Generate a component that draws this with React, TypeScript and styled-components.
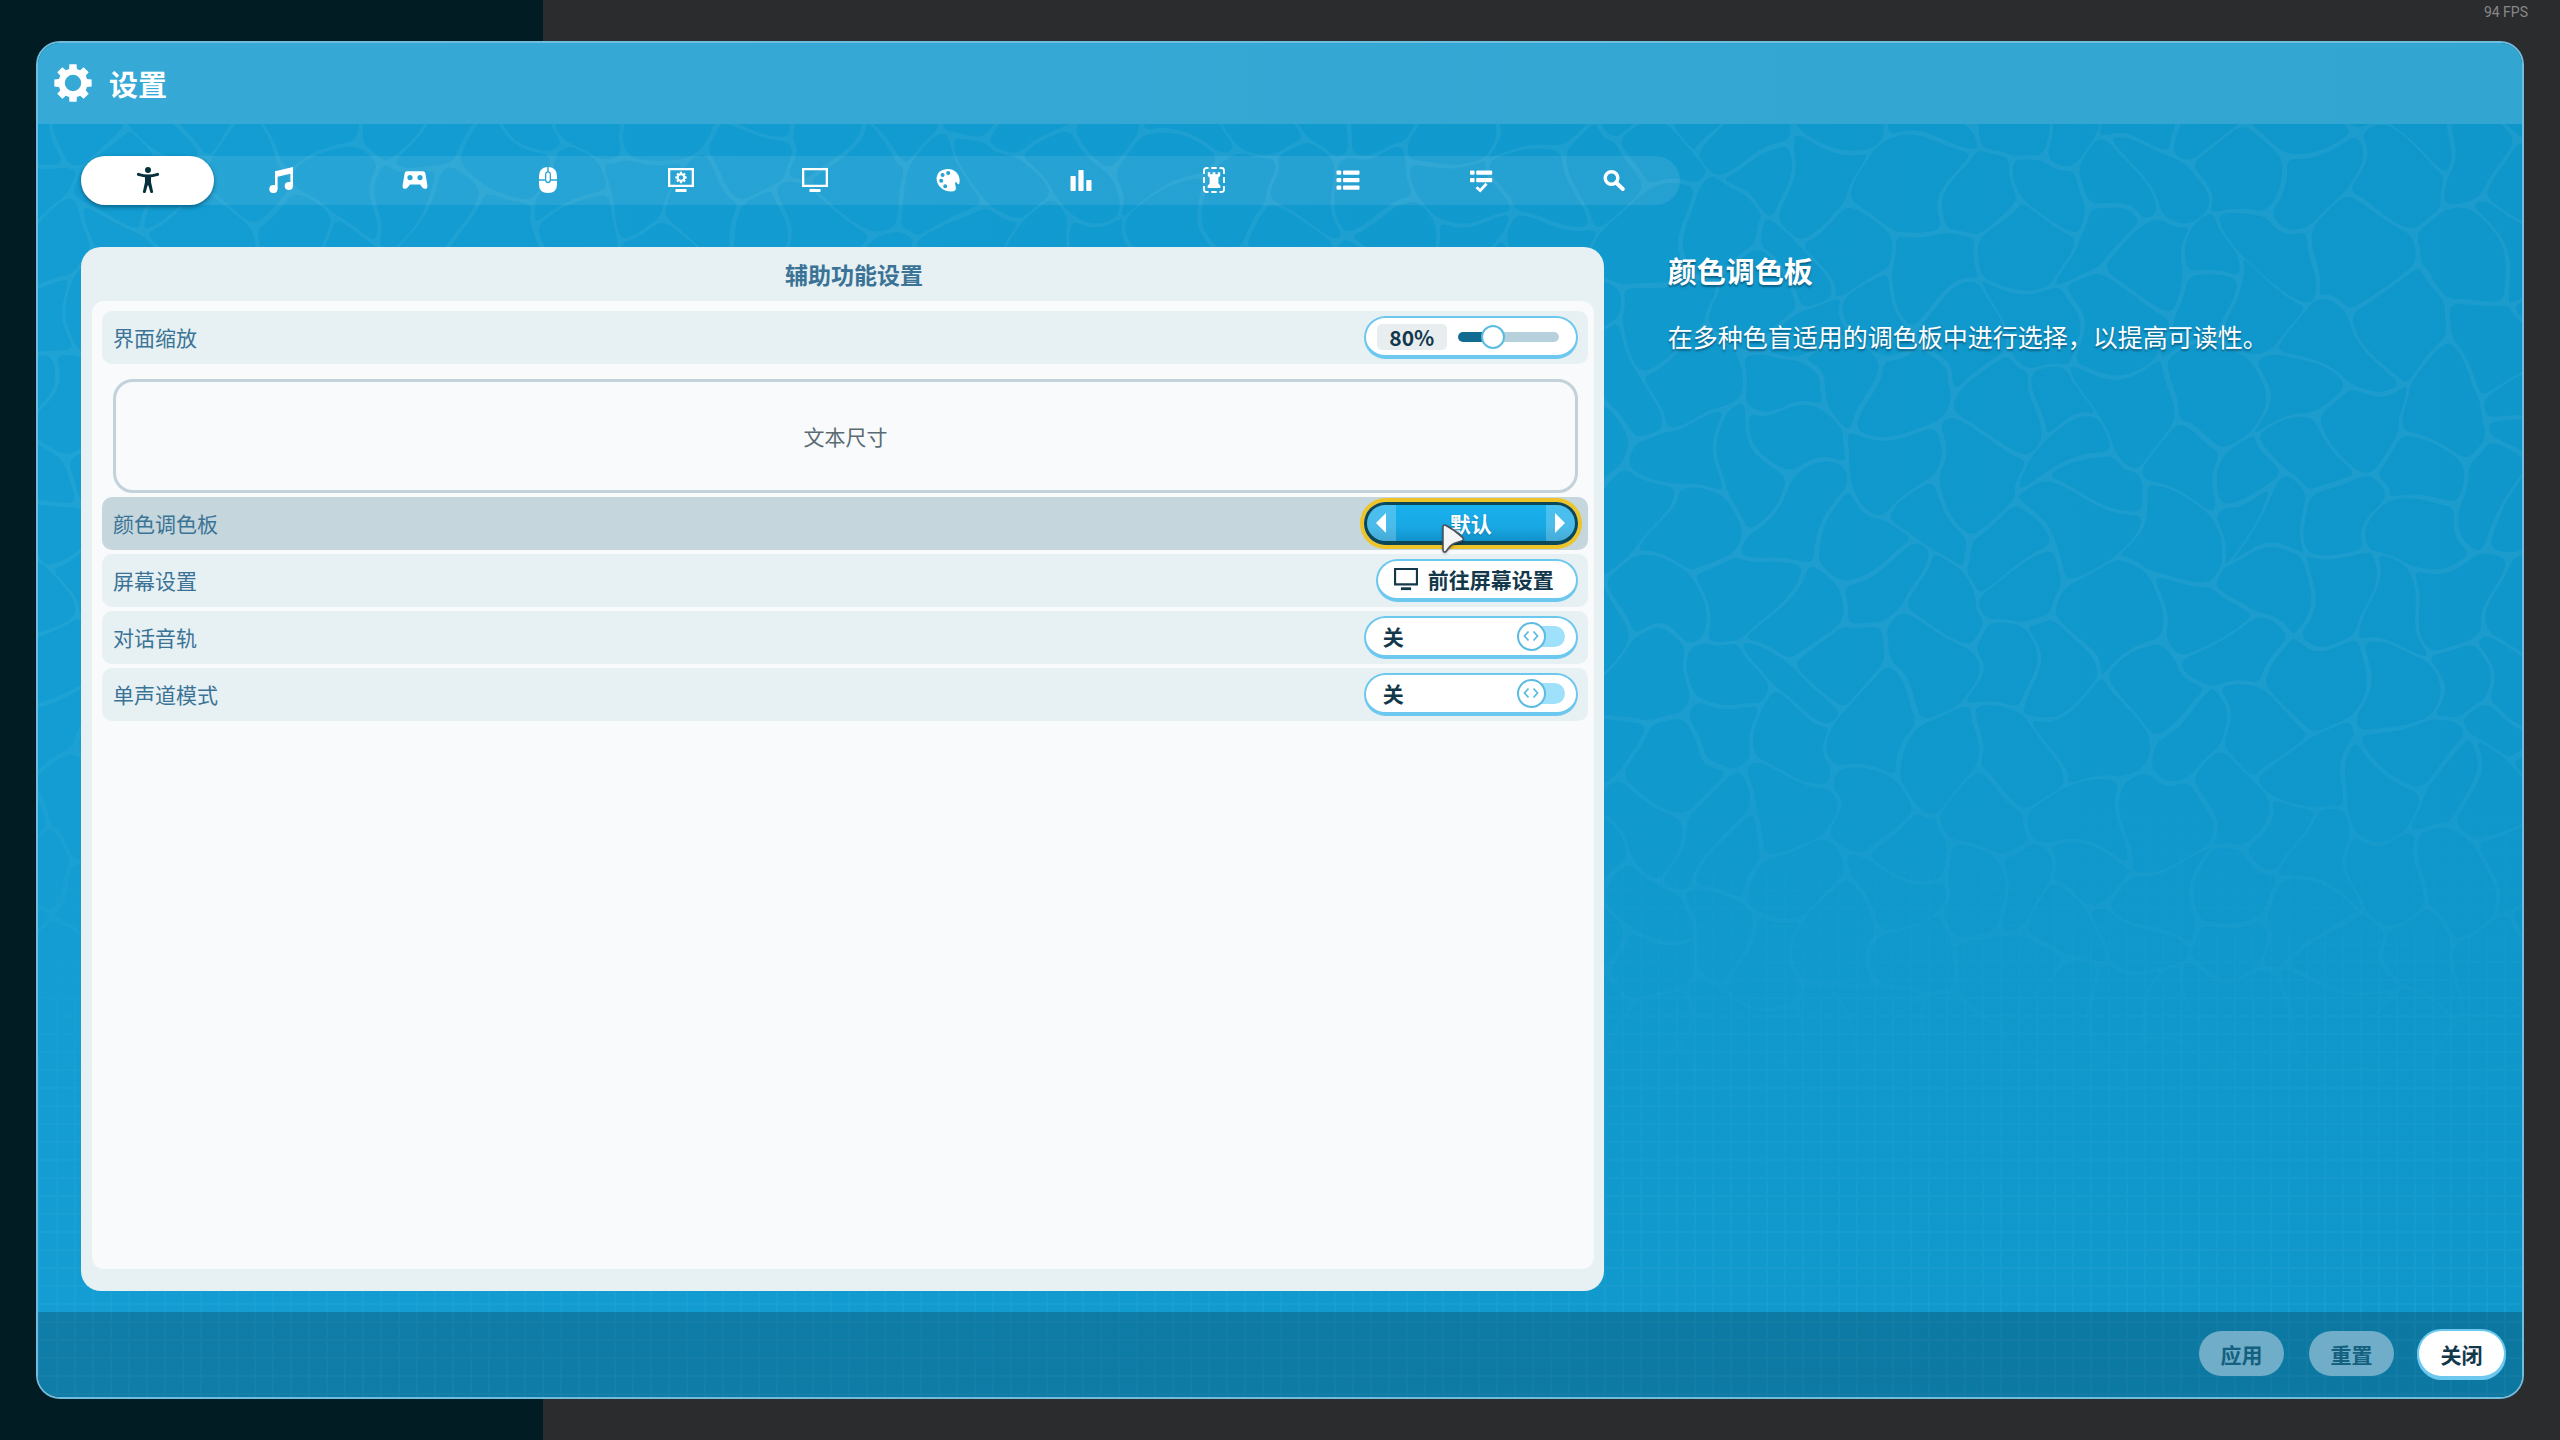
import React, { useState } from 'react';
import type { ReactNode } from 'react';
import styled, { createGlobalStyle, css } from 'styled-components';

const color = {
  ink: '#14384b',
  label: '#3a7396',
  line: '#6cc8ee',
  soft: '#e7f0f2',
  paper: '#f8fafc',
  selected: '#c5d6dc',
};

const GlobalStyle = createGlobalStyle`
  *, *::before, *::after { box-sizing: border-box; }
  body {
    margin: 0;
    font-family: 'Noto Sans CJK SC', 'Noto Sans', sans-serif;
    font-size: 21px;
    line-height: 30px;
    color: ${color.ink};
  }
  button, input { font: inherit; color: inherit; margin: 0; }
  h1, h2, h3, p { margin: 0; }
`;

/* ---------- water backdrop ---------- */

type Point = [number, number];

const W = 2484;
const H = 1354;

function random(seed: number) {
  let s = seed;
  return () => {
    s = (s * 1664525 + 1013904223) % 4294967296;
    return s / 4294967296;
  };
}

function clip(poly: Point[], a: Point, b: Point, inset: number): Point[] {
  const dx = b[0] - a[0];
  const dy = b[1] - a[1];
  const len = Math.hypot(dx, dy);
  const nx = dx / len;
  const ny = dy / len;
  const limit = len / 2 - inset;
  const dist = (p: Point) => (p[0] - a[0]) * nx + (p[1] - a[1]) * ny - limit;
  const out: Point[] = [];
  poly.forEach((p, i) => {
    const q = poly[(i + 1) % poly.length];
    const dp = dist(p);
    const dq = dist(q);
    if (dp <= 0) out.push(p);
    if (dp * dq < 0) {
      const t = dp / (dp - dq);
      out.push([p[0] + (q[0] - p[0]) * t, p[1] + (q[1] - p[1]) * t]);
    }
  });
  return out;
}

function waterCells(): string {
  const rnd = random(29);
  const stepX = 74;
  const stepY = 70;
  const sites: { p: Point; c: number; r: number }[] = [];
  for (let r = -1; r < 21; r++) {
    for (let c = -1; c < 36; c++) {
      sites.push({
        p: [(c + (r % 2 ? 0.5 : 0) + (rnd() - 0.5) * 0.8) * stepX, (r + (rnd() - 0.5) * 0.8) * stepY],
        c,
        r,
      });
    }
  }
  const warp = ([x, y]: Point): Point => [
    x + 10 * Math.sin(y / 17 + x / 90) + 8 * Math.sin(y / 41 - x / 60),
    y + 10 * Math.sin(x / 19 + y / 80) + 8 * Math.sin(x / 37 - y / 70),
  ];
  const f = (n: number) => n.toFixed(1);
  return sites
    .map(site => {
      const [x, y] = site.p;
      let poly: Point[] = [[x - 150, y - 150], [x + 150, y - 150], [x + 150, y + 150], [x - 150, y + 150]];
      sites.forEach(o => {
        if (o !== site && Math.abs(o.c - site.c) < 4 && Math.abs(o.r - site.r) < 4) poly = clip(poly, site.p, o.p, 2);
      });
      if (poly.length < 3) return '';
      const fine: Point[] = [];
      poly.forEach((p, i) => {
        const q = poly[(i + 1) % poly.length];
        const n = Math.max(1, Math.round(Math.hypot(q[0] - p[0], q[1] - p[1]) / 17));
        for (let k = 0; k < n; k++) fine.push(warp([p[0] + ((q[0] - p[0]) * k) / n, p[1] + ((q[1] - p[1]) * k) / n]));
      });
      const mid = fine.map((p, i): Point => {
        const q = fine[(i + 1) % fine.length];
        return [(p[0] + q[0]) / 2, (p[1] + q[1]) / 2];
      });
      const last = mid[mid.length - 1];
      return `M${f(last[0])} ${f(last[1])}` + fine.map((p, i) => `Q${f(p[0])} ${f(p[1])} ${f(mid[i][0])} ${f(mid[i][1])}`).join('') + 'Z';
    })
    .join('');
}

const CELLS = waterCells();

const BackdropSvg = styled.svg`
  grid-area: 1 / 1;
  display: block;
  width: 100%;
  height: 100%;
  min-height: 0;
`;

const Backdrop = () => (
  <BackdropSvg viewBox={`0 0 ${W} ${H}`} preserveAspectRatio="xMidYMid slice" aria-hidden="true">
    <defs>
      <linearGradient id="sea" x1="0" y1="0" x2="1" y2="0">
        <stop offset="0" stopColor="#139dd2" />
        <stop offset="1" stopColor="#0f97cb" />
      </linearGradient>
      <linearGradient id="fadeDown" x1="0" y1="0" x2="0" y2="1">
        <stop offset="0" stopColor="#fff" />
        <stop offset="0.45" stopColor="#fff" />
        <stop offset="0.8" stopColor="#000" />
      </linearGradient>
      <linearGradient id="fadeUp" x1="0" y1="0" x2="0" y2="1">
        <stop offset="0.5" stopColor="#000" />
        <stop offset="1" stopColor="#fff" />
      </linearGradient>
      <mask id="cellGaps" maskUnits="userSpaceOnUse" x="0" y="0" width={W} height={H}>
        <rect width={W} height={H} fill="url(#fadeDown)" />
        <path d={CELLS} fill="#000" />
      </mask>
      <mask id="tileFade" maskUnits="userSpaceOnUse" x="0" y="0" width={W} height={H}>
        <rect width={W} height={H} fill="url(#fadeUp)" />
      </mask>
      <pattern id="tiles" width="18" height="18" patternUnits="userSpaceOnUse">
        <path d="M0 1H18M1 0V18" stroke="#fff" strokeWidth="2" opacity="0.045" />
      </pattern>
    </defs>
    <rect width={W} height={H} fill="url(#sea)" />
    <rect width={W} height={H} fill="#fff" opacity="0.05" mask="url(#cellGaps)" />
    <rect width={W} height={H} fill="url(#tiles)" mask="url(#tileFade)" />
  </BackdropSvg>
);

/* ---------- icons ---------- */

const Icon = styled.svg<{ $size?: number }>`
  display: block;
  flex: none;
  width: ${p => p.$size ?? 26}px;
  height: ${p => p.$size ?? 26}px;
  fill: currentColor;
`;

const gearPath = (c: number, r: number, inner: number, hole: number) => {
  const pts: string[] = [];
  for (let i = 0; i < 8; i++) {
    const a = (i * Math.PI) / 4 - Math.PI / 2;
    [[-0.27, inner], [-0.19, r], [0.19, r], [0.27, inner]].forEach(([d, rad]) =>
      pts.push(`${(c + Math.cos(a + d) * rad).toFixed(2)} ${(c + Math.sin(a + d) * rad).toFixed(2)}`),
    );
  }
  return `M${pts.join('L')}ZM${c - hole} ${c}a${hole} ${hole} 0 1 0 ${hole * 2} 0a${hole} ${hole} 0 1 0 ${-hole * 2} 0Z`;
};

const GearIcon = () => (
  <Icon $size={38} viewBox="0 0 38 38" aria-hidden="true">
    <path d={gearPath(19, 19, 14.6, 8.2)} fillRule="evenodd" />
  </Icon>
);

const MonitorShape = () => (
  <>
    <path d="M0 1H26V20H0ZM2.3 3.3V17.7H23.7V3.3Z" fillRule="evenodd" />
    <rect x="7.5" y="22" width="11" height="3" />
  </>
);

const MonitorIcon = ({ size = 26 }: { size?: number }) => (
  <Icon $size={size} viewBox="0 0 26 26" aria-hidden="true">
    <MonitorShape />
  </Icon>
);

const tabs: { name: string; art: ReactNode }[] = [
  {
    name: '辅助功能',
    art: (
      <>
        <circle cx="13" cy="3" r="3" />
        <path
          d="M3.4 7.4Q13 10.6 22.6 7.4"
          fill="none"
          stroke="currentColor"
          strokeWidth="3"
          strokeLinecap="round"
        />
        <path d="M10 8.5H16V15L18 24.2a1.4 1.4 0 0 1-2.8.9L13.4 18.5h-.8L10.8 25.1a1.4 1.4 0 0 1-2.8-.9L10 15Z" />
      </>
    ),
  },
  {
    name: '音频',
    art: (
      <>
        <path d="M7 4.3L25 0V19.5H22.4V6.7L9.6 9.7V22H7Z" />
        <circle cx="5.4" cy="22" r="4.1" />
        <circle cx="20.8" cy="19" r="4.1" />
      </>
    ),
  },
  {
    name: '手柄',
    art: (
      <path
        fillRule="evenodd"
        d="M5 4.2H21Q22.8 4.2 23.3 6L25.4 18.4Q25.7 21.8 22.8 21.8 21.6 21.8 20.4 20.4L18 17.4H8L5.6 20.4Q4.4 21.8 3.2 21.8.3 21.8.6 18.4L2.7 6Q3.2 4.2 5 4.2ZM5.4 10.6a2.6 2.6 0 1 0 5.2 0a2.6 2.6 0 1 0-5.2 0ZM15.4 10.6a2.6 2.6 0 1 0 5.2 0a2.6 2.6 0 1 0-5.2 0Z"
      />
    ),
  },
  {
    name: '鼠标',
    art: (
      <>
        <path d="M12.3 0V4.2Q10 4.8 10 7V12.3H4V9Q4 .8 12.3 0ZM13.7 0V4.2Q16 4.8 16 7V12.3H22V9Q22 .8 13.7 0ZM4 13.8H10Q10.5 16.3 13 16.3T16 13.8H22V17.5Q22 26 13 26T4 17.5Z" />
        <rect x="11.3" y="5.6" width="3.4" height="9.2" rx="1.7" />
      </>
    ),
  },
  {
    name: '画面',
    art: (
      <>
        <MonitorShape />
        <g transform="translate(7.2 4.7)">
          <path d={gearPath(5.8, 5.8, 4.3, 2.3)} fillRule="evenodd" />
        </g>
      </>
    ),
  },
  { name: '屏幕', art: <MonitorShape /> },
  {
    name: '颜色',
    art: (
      <path
        fillRule="evenodd"
        d="M12 2C20 1.500 25 7.500 24.700 14.500Q24.500 17.500 23 17.200L20.800 14.800Q19.800 15.400 20.200 17.500L20.900 20.500Q21.300 24.500 16.500 24.500C7.500 24.500 1.500 18.500 1.500 11Q2 3 12 2ZM11.200 6a2 2 0 1 0 4 0a2 2 0 1 0-4 0ZM5.600 8a2 2 0 1 0 4 0a2 2 0 1 0-4 0ZM4.200 13.800a2 2 0 1 0 4 0a2 2 0 1 0-4 0ZM8.200 19.200a2 2 0 1 0 4 0a2 2 0 1 0-4 0Z"
      />
    ),
  },
  {
    name: '统计',
    art: (
      <>
        <rect x="2.500" y="9" width="5.200" height="15" rx="0.800" />
        <rect x="10.400" y="3" width="5.200" height="21" rx="0.800" />
        <rect x="18.300" y="13" width="5.200" height="11" rx="0.800" />
      </>
    ),
  },
  {
    name: '游戏',
    art: (
      <>
        <path
          d="M3 7V3.500Q3 1 5.500 1H7.500M10.300 1H15.700M18.500 1H20.500Q23 1 23 3.500V7M23 10V16M23 19V22.500Q23 25 20.500 25H18.500M15.700 25H10.300M7.500 25H5.500Q3 25 3 22.500V19M3 16V10"
          fill="none"
          stroke="currentColor"
          strokeWidth="1.800"
        />
        <path d="M6.800 5.300H9.200V7.200H11.600V5.300H14.400V7.200H16.800V5.300H19.200V9L17.400 10.600V16.500L19.400 18.800V20.900H6.600V18.800L8.600 16.500V10.600L6.800 9Z" />
      </>
    ),
  },
  {
    name: '列表',
    art: (
      <>
        {[3.5, 11, 18.5].map(y => (
          <g key={y}>
            <rect x="1.500" y={y} width="4.800" height="4.300" rx="1" />
            <rect x="8" y={y} width="16.500" height="4.300" rx="1" />
          </g>
        ))}
      </>
    ),
  },
  {
    name: '任务',
    art: (
      <>
        {[3.5, 11].map(y => (
          <g key={y}>
            <rect x="2" y={y} width="4.600" height="4.300" rx="1" />
            <rect x="8.200" y={y} width="16" height="4.300" rx="1" />
          </g>
        ))}
        <path d="M8.500 20.200L12.200 23.500L18.500 16.800" fill="none" stroke="currentColor" strokeWidth="2.800" />
      </>
    ),
  },
  {
    name: '搜索',
    art: (
      <>
        <circle cx="10.500" cy="11" r="6.300" fill="none" stroke="currentColor" strokeWidth="3.400" />
        <path d="M15.200 15.700L21.800 22" stroke="currentColor" strokeWidth="4" strokeLinecap="round" />
      </>
    ),
  },
];

/* ---------- window ---------- */

const Screen = styled.div`
  display: flex;
  flex-direction: column;
  height: 100vh;
  min-height: 900px;
  padding: 0 36px 41px;
  background: linear-gradient(90deg, #021c24 543px, #2b2c2e 543px);
`;

const TopStrip = styled.div`
  display: flex;
  justify-content: flex-end;
  height: 41px;
  flex: none;
  margin-right: -4px;
  font: 14px/24px Roboto, sans-serif;
  color: #87888a;
`;

const Window = styled.main`
  display: grid;
  grid-template: minmax(0, 1fr) / minmax(0, 1fr);
  flex: 1;
  min-height: 0;
  overflow: hidden;
  border: 2px solid #6fbcdf;
  border-radius: 24px;
`;

const WindowContent = styled.div`
  grid-area: 1 / 1;
  display: flex;
  flex-direction: column;
  min-height: 0;
  z-index: 1;
`;

const Header = styled.header`
  display: flex;
  align-items: center;
  gap: 17px;
  flex: none;
  height: 81px;
  padding: 0 16px 2px;
  background: linear-gradient(90deg, #37a9d6, #33a5d1);
  color: #fff;
`;

const Title = styled.h1`
  font-size: 29px;
  line-height: 40px;
  font-weight: 700;
`;

const Body = styled.div`
  display: flex;
  flex-direction: column;
  gap: 42px;
  flex: 1;
  min-height: 0;
  padding: 32px 42px 21px 43px;
`;

const TabBar = styled.nav`
  display: grid;
  grid-template-columns: repeat(12, minmax(0, 1fr));
  flex: none;
  width: calc(100% * 2 / 3);
  height: 49px;
  border-radius: 25px;
  background: rgba(255, 255, 255, 0.085);
`;

const Tab = styled.button<{ $active: boolean }>`
  display: grid;
  place-items: center;
  padding: 0 0 1px 1px;
  border: 0;
  border-radius: 25px;
  background: none;
  color: #fff;
  cursor: pointer;
  ${p =>
    p.$active &&
    css`
      background: #fff;
      color: #06303d;
      box-shadow: 0 2px 4px rgba(0, 40, 60, 0.5);
    `}
`;

const Columns = styled.div`
  display: grid;
  grid-template-columns: minmax(0, 15fr) minmax(0, 8fr);
  gap: 64px;
  flex: 1;
  min-height: 0;
`;

const Card = styled.section`
  display: flex;
  flex-direction: column;
  min-height: 0;
  padding: 0 10px 22px 11px;
  border-radius: 20px;
  background: ${color.soft};
`;

const CardTitle = styled.h2`
  flex: none;
  height: 54px;
  padding: 2px 0 0 22px;
  font-size: 23px;
  line-height: 50px;
  font-weight: 700;
  text-align: center;
  color: ${color.label};
`;

const List = styled.div`
  display: flex;
  flex-direction: column;
  gap: 4px;
  flex: 1;
  min-height: 0;
  padding: 10px 6px 10px 10px;
  border-radius: 12px;
  background: ${color.paper};
`;

const Row = styled.div<{ $selected?: boolean }>`
  display: flex;
  align-items: center;
  justify-content: space-between;
  flex: none;
  height: 53px;
  padding: 0 10px 0 11px;
  border-radius: 10px;
  background: ${p => (p.$selected ? color.selected : color.soft)};
`;

const RowLabel = styled.label`
  padding-bottom: 2px;
  color: ${color.label};
`;

const Preview = styled.div`
  display: grid;
  place-items: center;
  flex: none;
  height: 114px;
  margin: 11px 10px 0 11px;
  border: 3px solid #c3d2da;
  border-radius: 20px;
  color: #5b6b73;
`;

/* ---------- controls ---------- */

const pill = css`
  height: 43px;
  border: 2px solid ${color.line};
  border-bottom-width: 4px;
  border-radius: 22px;
  background: #fff;
`;

const SliderPill = styled.div`
  ${pill}
  display: flex;
  align-items: center;
  gap: 11px;
  width: 214px;
  padding: 0 17px 0 11px;
`;

const SliderValue = styled.output`
  width: 70px;
  height: 26px;
  border-radius: 5px;
  background: #e8eef0;
  font-size: 21px;
  line-height: 26px;
  font-weight: 700;
  text-align: center;
`;

const Range = styled.input<{ $fill: number }>`
  appearance: none;
  flex: 1;
  min-width: 0;
  height: 24px;
  background: none;
  cursor: pointer;
  &::-webkit-slider-runnable-track {
    height: 10px;
    border-radius: 5px;
    background: linear-gradient(90deg, #126c92 ${p => p.$fill}%, #b7d1dc ${p => p.$fill}%);
  }
  &::-webkit-slider-thumb {
    appearance: none;
    width: 24px;
    height: 24px;
    margin-top: -7px;
    border: 2px solid #5bbbe2;
    border-radius: 50%;
    background: #fff;
  }
`;

const Stepper = styled.div`
  position: relative;
  display: flex;
  width: 214px;
  height: 43px;
  border: 3px solid #0b4757;
  border-bottom-width: 4px;
  border-radius: 22px;
  background: linear-gradient(#18b1ee, #18a8e4 60%, #1192cb);
  box-shadow: 0 0 0 4px #efc428;
`;

const StepButton = styled.button<{ $side: 'left' | 'right' }>`
  display: grid;
  place-items: center;
  width: 29px;
  padding: 0;
  border: 0;
  border-radius: ${p => (p.$side === 'left' ? '19px 0 0 19px' : '0 19px 19px 0')};
  background: rgba(255, 255, 255, 0.22);
  color: #fff;
  cursor: pointer;
`;

const StepValue = styled.output`
  flex: 1;
  line-height: 36px;
  font-weight: 700;
  text-align: center;
  color: #fff;
  text-shadow: 0 1px 2px rgba(0, 60, 90, 0.4);
`;

const Pointer = styled.svg`
  position: absolute;
  left: 73px;
  top: 17px;
  width: 28px;
  height: 34px;
  pointer-events: none;
  filter: drop-shadow(0 1px 1px rgba(0, 0, 0, 0.3));
`;

const LinkButton = styled.button`
  ${pill}
  display: flex;
  align-items: center;
  gap: 10px;
  padding: 0 22px 2px 16px;
  font-weight: 700;
  cursor: pointer;
`;

const TogglePill = styled.label`
  ${pill}
  display: flex;
  align-items: center;
  justify-content: space-between;
  width: 214px;
  padding: 0 11px 1px 17px;
  font-weight: 700;
  cursor: pointer;
`;

const Switch = styled.span<{ $on: boolean }>`
  display: grid;
  align-items: center;
  justify-items: ${p => (p.$on ? 'end' : 'start')};
  width: 48px;
  height: 30px;
`;

const SwitchInput = styled.input`
  grid-area: 1 / 1;
  width: 48px;
  height: 30px;
  opacity: 0;
`;

const SwitchTrack = styled.span`
  grid-area: 1 / 1;
  width: 45px;
  height: 21px;
  justify-self: end;
  border-radius: 11px;
  background: #9fe1fb;
`;

const SwitchKnob = styled.span`
  grid-area: 1 / 1;
  display: grid;
  place-items: center;
  width: 29px;
  height: 29px;
  border: 2px solid #5bbbe2;
  border-radius: 50%;
  background: #fff;
  color: #5bbbe2;
`;

const Details = styled.aside`
  display: flex;
  flex-direction: column;
  gap: 28px;
  padding-top: 3px;
  color: #fff;
  text-shadow: 0 2px 2px rgba(0, 50, 75, 0.55);
`;

const DetailsTitle = styled.h3`
  font-size: 29px;
  line-height: 40px;
  font-weight: 700;
`;

const DetailsText = styled.p`
  font-size: 25px;
  line-height: 36px;
`;

const Footer = styled.footer`
  display: flex;
  justify-content: flex-end;
  gap: 25px;
  flex: none;
  padding: 19px 18px 21px;
  background: rgba(0, 0, 0, 0.2);
`;

const ActionButton = styled.button<{ $primary?: boolean }>`
  min-width: 85px;
  height: 45px;
  padding: 0 20px;
  border: 0;
  border-radius: 23px;
  background: #6fadc8;
  color: #13607f;
  font-weight: 700;
  ${p =>
    p.$primary &&
    css`
      background: #fff;
      color: ${color.ink};
      box-shadow: 0 0 0 2px ${color.line}, 0 2px 0 2px ${color.line};
      cursor: pointer;
    `}
`;

const Triangle = ({ flip = false }: { flip?: boolean }) => (
  <Icon $size={20} viewBox="0 0 20 20" aria-hidden="true">
    <path d={flip ? 'M5 0L15 10L5 20Z' : 'M15 0L5 10L15 20Z'} />
  </Icon>
);

const Toggle = ({ id }: { id: string }) => {
  const [on, setOn] = useState(false);
  return (
    <TogglePill>
      {on ? '开' : '关'}
      <Switch $on={on}>
        <SwitchTrack />
        <SwitchKnob>
          <Icon $size={16} viewBox="0 0 16 16" aria-hidden="true">
            <path d="M5.500 3.500L1.500 8L5.500 12.500M10.500 3.500L14.500 8L10.500 12.500" fill="none" stroke="currentColor" strokeWidth="1.800" />
          </Icon>
        </SwitchKnob>
        <SwitchInput id={id} type="checkbox" checked={on} onChange={e => setOn(e.target.checked)} />
      </Switch>
    </TogglePill>
  );
};

const palettes = ['默认', '红色盲', '绿色盲', '蓝色盲'];

export default function App() {
  const [tab, setTab] = useState(0);
  const [scale, setScale] = useState(80);
  const [palette, setPalette] = useState(0);
  const step = (by: number) => setPalette((palette + by + palettes.length) % palettes.length);

  return (
    <>
      <GlobalStyle />
      <Screen>
        <TopStrip>94 FPS</TopStrip>
        <Window>
          <Backdrop />
          <WindowContent>
            <Header>
              <GearIcon />
              <Title>设置</Title>
            </Header>
            <Body>
              <TabBar>
                {tabs.map((t, i) => (
                  <Tab key={t.name} type="button" aria-label={t.name} $active={i === tab} onClick={() => setTab(i)}>
                    <Icon viewBox="0 0 26 26" aria-hidden="true">
                      {t.art}
                    </Icon>
                  </Tab>
                ))}
              </TabBar>
              <Columns>
                <Card>
                  <CardTitle>辅助功能设置</CardTitle>
                  <List>
                    <Row>
                      <RowLabel htmlFor="scale">界面缩放</RowLabel>
                      <SliderPill>
                        <SliderValue htmlFor="scale">{scale}%</SliderValue>
                        <Range
                          id="scale"
                          type="range"
                          min={50}
                          max={150}
                          value={scale}
                          $fill={12 + (scale - 50) * 0.76}
                          onChange={e => setScale(Number(e.target.value))}
                        />
                      </SliderPill>
                    </Row>
                    <Preview>文本尺寸</Preview>
                    <Row $selected>
                      <RowLabel htmlFor="palette">颜色调色板</RowLabel>
                      <Stepper>
                        <StepButton type="button" $side="left" aria-label="上一个" onClick={() => step(-1)}>
                          <Triangle />
                        </StepButton>
                        <StepValue id="palette">{palettes[palette]}</StepValue>
                        <StepButton type="button" $side="right" aria-label="下一个" onClick={() => step(1)}>
                          <Triangle flip />
                        </StepButton>
                        <Pointer viewBox="0 0 28 34" aria-hidden="true">
                          <path
                            d="M4.500 3Q3 3 3 5V28Q3.200 31 6 29.500Q10 23.500 14 21.500L21.500 19Q24.500 18 22.500 15.500Q15 8 6 3.500Q5 3 4.500 3Z"
                            fill="#f4f5f7"
                            stroke="#4a4f55"
                            strokeWidth="1.500"
                          />
                        </Pointer>
                      </Stepper>
                    </Row>
                    <Row>
                      <RowLabel htmlFor="display">屏幕设置</RowLabel>
                      <LinkButton id="display" type="button" onClick={() => setTab(5)}>
                        <MonitorIcon size={24} />
                        前往屏幕设置
                      </LinkButton>
                    </Row>
                    <Row>
                      <RowLabel htmlFor="dialogue">对话音轨</RowLabel>
                      <Toggle id="dialogue" />
                    </Row>
                    <Row>
                      <RowLabel htmlFor="mono">单声道模式</RowLabel>
                      <Toggle id="mono" />
                    </Row>
                  </List>
                </Card>
                <Details>
                  <DetailsTitle>颜色调色板</DetailsTitle>
                  <DetailsText>在多种色盲适用的调色板中进行选择，以提高可读性。</DetailsText>
                </Details>
              </Columns>
            </Body>
            <Footer>
              <ActionButton type="button" disabled>
                应用
              </ActionButton>
              <ActionButton type="button" disabled>
                重置
              </ActionButton>
              <ActionButton type="button" $primary>
                关闭
              </ActionButton>
            </Footer>
          </WindowContent>
        </Window>
      </Screen>
    </>
  );
}
